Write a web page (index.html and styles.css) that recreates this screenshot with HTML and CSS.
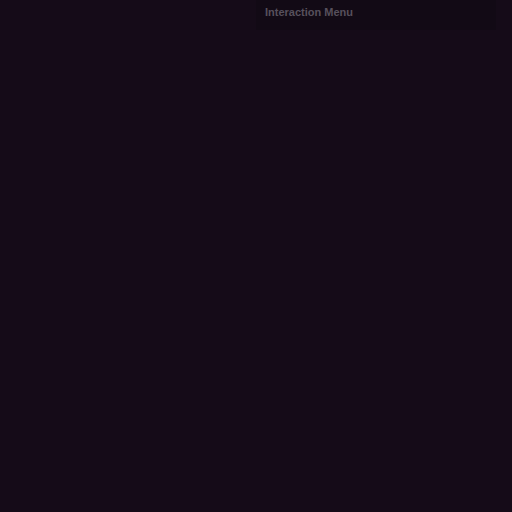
FILE: index.html
```html
<!DOCTYPE html>
<html>
<head>
<meta charset="utf-8">
<link rel="stylesheet" href="styles.css">
</head>
<body>
<div class="stage">
  <div class="menu">
    <div class="menu-title">Interaction Menu</div>
  </div>
</div>
</body>
</html>
```
FILE: styles.css
```css
html, body {
  margin: 0;
  padding: 0;
  background: #150b18;
  width: 512px;
  height: 512px;
  overflow: hidden;
}
.stage {
  display: flex;
  justify-content: flex-end;
  padding-right: 16px;
}
.menu {
  box-sizing: border-box;
  width: 240px;
  height: 30px;
  padding: 6px 9px 0;
  background: #120a15;
}
.menu-title {
  font-family: "Liberation Sans", Arial, sans-serif;
  font-weight: bold;
  font-size: 11px;
  line-height: 13px;
  color: #57505c;
}
```
